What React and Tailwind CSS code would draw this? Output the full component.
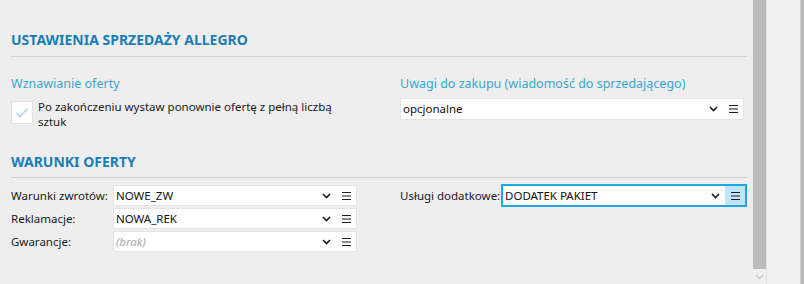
import React from "react";

const font = { fontFamily: '"Noto Sans", "Open Sans", sans-serif' };

function Chevron() {
  return (
    <svg width="9" height="6" viewBox="0 0 9 6" className="shrink-0">
      <path d="M1 1 L4.5 4.5 L8 1" fill="none" stroke="#1a1a1a" strokeWidth="1.6" />
    </svg>
  );
}

function Burger() {
  return (
    <svg width="9" height="8" viewBox="0 0 9 8" className="shrink-0">
      <path d="M0 0.5 H9 M0 4 H9 M0 7.5 H9" stroke="#1a1a1a" strokeWidth="1" />
    </svg>
  );
}

function Select({ value, placeholder, className = "" }) {
  return (
    <div className={`flex items-center h-[21px] bg-white border border-[#e4e4e4] ${className}`}>
      <div className={`flex-1 pl-[2px] text-[11.5px] leading-none whitespace-nowrap ${placeholder ? "italic text-[#a8a8a8]" : "text-[#111]"}`}>
        {value}
      </div>
      <div className="w-[20px] flex items-center justify-center">
        <Chevron />
      </div>
      <div className="w-[20px] h-full flex items-center justify-center">
        <Burger />
      </div>
    </div>
  );
}

function Row({ label, value, placeholder }) {
  return (
    <div className="flex items-center h-[21px]">
      <div className="w-[102px] text-[11.5px] whitespace-nowrap text-[#1a1a1a]">{label}</div>
      <Select value={value} placeholder={placeholder} className="w-[244px]" />
    </div>
  );
}

export default function App() {
  return (
    <div className="w-[804px] h-[284px] flex bg-[#eeeeee] overflow-hidden" style={font}>
      <div className="w-[753px] h-full pl-[11px] pr-[6px]">
        <div className="pt-[31px]">
          <div className="text-[14px] font-bold leading-[18px] text-[#1b7db5]">USTAWIENIA SPRZEDAŻY ALLEGRO</div>
          <div className="mt-[7px] border-t border-[#d3d3d3]" />
        </div>
        <div className="grid grid-cols-[389px_1fr] mt-[18px]">
          <div>
            <div className="text-[12.5px] leading-[18px] text-[#3aa5d2]">Wznawianie oferty</div>
            <div className="flex mt-[8px]">
              <div className="w-[22px] h-[23px] bg-white border border-[#e2e2e2] flex items-center justify-center shrink-0">
                <svg width="14" height="11" viewBox="0 0 14 11">
                  <path d="M1.5 6 L5 9.5 L12.5 1.5" fill="none" stroke="#a9dcf0" strokeWidth="1.6" />
                </svg>
              </div>
              <div className="ml-[5px] text-[11.5px] leading-[15px] text-[#1a1a1a] -mt-[2px] whitespace-nowrap">
                Po zakończeniu wystaw ponownie ofertę z pełną liczbą
                <br />
                sztuk
              </div>
            </div>
          </div>
          <div>
            <div className="text-[12.5px] leading-[18px] text-[#3aa5d2] whitespace-nowrap">Uwagi do zakupu (wiadomość do sprzedającego)</div>
            <Select value="opcjonalne" className="mt-[5px] w-[344px] h-[22px]" />
          </div>
        </div>
        <div className="mt-[24px]">
          <div className="text-[14px] font-bold leading-[18px] text-[#1b7db5]">WARUNKI OFERTY</div>
          <div className="mt-[6px] border-t border-[#d3d3d3]" />
        </div>
        <div className="grid grid-cols-[389px_1fr] mt-[6px]">
          <div className="flex flex-col gap-[2px] pt-[1px]">
            <Row label="Warunki zwrotów:" value="NOWE_ZW" />
            <Row label="Reklamacje:" value="NOWA_REK" />
            <Row label="Gwarancje:" value="(brak)" placeholder />
          </div>
          <div className="flex items-center h-[23px] self-start">
            <div className="w-[101px] text-[11.5px] whitespace-nowrap text-[#1a1a1a]">Usługi dodatkowe:</div>
            <div className="flex items-center w-[246px] h-[23px] bg-white border-2 border-[#1ea5e6]">
              <div className="flex-1 pl-[2px] text-[11.5px] whitespace-nowrap text-[#111]">DODATEK PAKIET</div>
              <div className="w-[20px] flex items-center justify-center">
                <Chevron />
              </div>
              <div className="w-[20px] h-full flex items-center justify-center bg-[#bfe6f8]">
                <Burger />
              </div>
            </div>
          </div>
        </div>
      </div>
      <div className="w-[13px] h-full flex flex-col bg-[#f0f0f0]">
        <div className="h-[269px] bg-[#bababa]" />
        <div className="flex-1 flex items-center justify-center">
          <svg width="9" height="6" viewBox="0 0 9 6">
            <path d="M1 1 L4.5 4.5 L8 1" fill="none" stroke="#c4c4c4" strokeWidth="1.2" />
          </svg>
        </div>
      </div>
      <div className="w-[34px] h-full bg-[#f0f0f0] border-l border-[#e2e2e2]" />
      <div className="w-[4px] h-full bg-[#b8b8b8] border-l border-[#cfcfcf]" />
    </div>
  );
}
